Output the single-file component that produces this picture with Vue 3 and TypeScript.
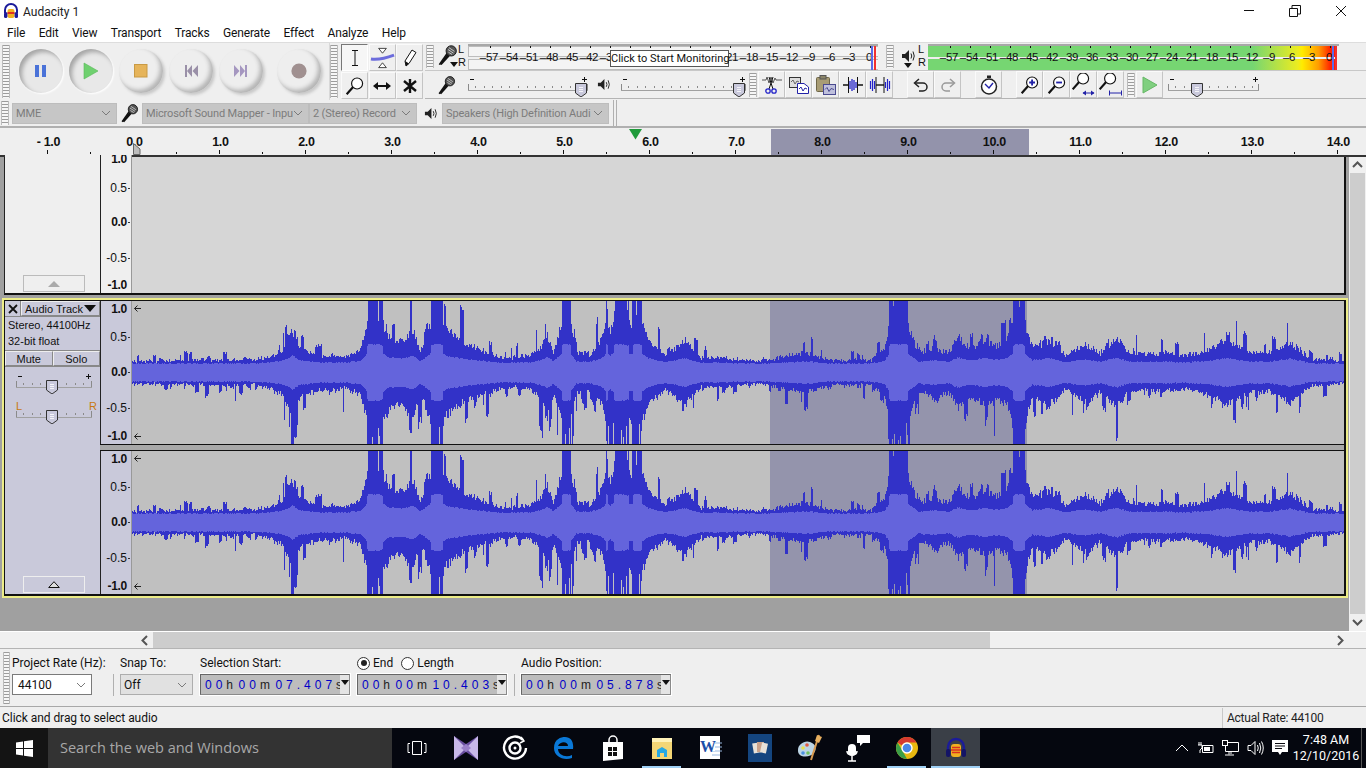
<script setup lang="ts">
import { h } from 'vue'

// ---------- waveform ----------
const envKeys: number[][] = [
  [132,18],[200,20],[255,20],[270,28],[282,38],[292,72],[300,40],[320,28],[345,26],[360,36],[368,95],[380,95],[388,62],[400,52],[408,64],[413,72],[420,34],[432,95],[440,95],[447,70],[455,60],[468,46],[490,32],[505,24],[530,28],[540,42],[547,64],[553,34],[563,95],[569,95],[576,34],[590,30],[603,60],[606,95],[610,72],[616,95],[624,95],[631,80],[634,95],[640,95],[648,54],[665,28],[685,54],[700,24],[720,24],[760,18],[785,26],[805,34],[830,20],[870,20],[884,38],[890,95],[905,95],[918,32],[934,42],[948,32],[958,60],[970,40],[985,56],[995,44],[1006,54],[1015,95],[1023,95],[1032,42],[1050,54],[1065,28],[1085,48],[1100,32],[1116,58],[1130,30],[1165,32],[1185,27],[1210,38],[1226,56],[1250,32],[1270,32],[1290,52],[1310,22],[1344,17],
]
function envAt(x: number): number {
  for (let i = 1; i < envKeys.length; i++) {
    if (x <= envKeys[i][0]) {
      const [x0, y0] = envKeys[i - 1]
      const [x1, y1] = envKeys[i]
      return y0 + ((y1 - y0) * (x - x0)) / (x1 - x0)
    }
  }
  return 15
}
let seed = 12345
function rnd(): number {
  seed = (seed * 1664525 + 1013904223) % 4294967296
  return seed / 4294967296
}
const c = 71.5
let peakPath = ''
let rmsPath = ''
// clustered spikes: each side keeps a short-lived burst level
function makeSide() {
  let burst = 0
  let left = 0
  return (e: number): number => {
    if (e >= 85) return rnd() < 0.12 ? 50 + rnd() * 20 : 71.5
    if (left <= 0 && rnd() < 0.14) {
      burst = rnd() * rnd()
      left = 1 + Math.floor(rnd() * 4)
    }
    left--
    const b = left >= 0 ? burst : 0
    return Math.min(71.5, e * (0.5 + 0.14 * rnd() + 0.95 * b) + rnd() * 2)
  }
}
const upper = makeSide()
const lower = makeSide()
for (let i = 0; i < 1212; i++) {
  const e = envAt(i + 132)
  const top = upper(e)
  const bot = lower(e)
  const rms = Math.min(30, 5.5 + e * 0.15 + (e > 85 ? 8 : 0)) + rnd() * 1.2
  peakPath += `M${i + 0.5} ${(c - top).toFixed(1)}V${(c + bot).toFixed(1)}`
  rmsPath += `M${i + 0.5} ${(c - rms).toFixed(1)}V${(c + rms).toFixed(1)}`
}

// ---------- data ----------
const menus = ['File', 'Edit', 'View', 'Transport', 'Tracks', 'Generate', 'Effect', 'Analyze', 'Help']
const dbs = [57, 54, 51, 48, 45, 42, 39, 36, 33, 30, 27, 24, 21, 18, 15, 12, 9, 6, 3, 0]
const rulerLabels = [-1, 0, 1, 2, 3, 4, 5, 6, 7, 8, 9, 10, 11, 12, 13, 14]
const fmt = (n: number) => (n < 0 ? '- ' + Math.abs(n).toFixed(1) : n.toFixed(1))
const sec = 86
const zero = 133.4
const majorTicks = rulerLabels.map((n) => zero + n * sec)
const minorTicks = rulerLabels.map((n) => zero + (n + 0.5) * sec).filter((x) => x < 1366)
const rulerMarks = majorTicks.map((x) => `M${Math.round(x) + 0.5} 22V26`).join('') + minorTicks.map((x) => `M${Math.round(x) + 0.5} 24V26`).join('')

// ---------- slider ----------
function Slider(props: { w: number; t: number; plain?: boolean }) {
  const { w, t, plain } = props
  let ticks = `M1.5 11V17M${w - 1.5} 11V17`
  for (let x = 8; x < w - 4; x += 8.6) ticks += `M${Math.round(x) + 0.5} 13V15`
  const signs = plain ? '' : `M3 6.5H7M${w - 7} 6.5H${w - 2}M${w - 4.5} 4V9`
  return h('svg', { width: w, height: 24, viewBox: `0 0 ${w} 24`, class: 'sld' }, [
    h('path', { d: ticks, stroke: '#8a8a8a', fill: 'none', 'shape-rendering': 'crispEdges' }),
    h('path', { d: `M1 17.5H${w - 1}`, stroke: '#a0a0a0', fill: 'none', 'shape-rendering': 'crispEdges' }),
    h('path', { d: signs, stroke: '#111', fill: 'none', 'shape-rendering': 'crispEdges' }),
    h('path', { d: `M${t - 5.5} 10.5H${t + 5.5}V20L${t} 24L${t - 5.5} 20Z`, fill: '#c9c9dc', stroke: '#333' }),
    h('path', { d: `M${t - 2} 14.5H${t + 2}M${t - 2} 16.5H${t + 2}M${t - 2} 18.5H${t + 2}`, stroke: '#f4f4f8' }),
  ])
}
Slider.props = ['w', 't', 'plain']

function Grip() {
  return h('div', { class: 'grip' })
}
</script>

<template>
  <div class="app">
    <svg class="defs">
      <symbol id="mic" viewBox="0 0 24 24">
        <path d="M3 22 L11 11 L14 13 L5 23 Z" fill="#111" />
        <path d="M2.5 22.5 L12 9" stroke="#111" stroke-width="1.6" />
        <circle cx="15.5" cy="7.5" r="5.6" fill="#555" stroke="#111" />
        <path d="M12 6l6 4M13 4l6 4M12.5 9l4 2.5" stroke="#ddd" stroke-width=".9" />
      </symbol>
      <symbol id="spk" viewBox="0 0 14 14">
        <path d="M1 5H4L8 1V13L4 9H1Z" fill="#222" />
        <path d="M10 4.5Q11.5 7 10 9.5M12 2.5Q14.5 7 12 11.5" stroke="#222" fill="none" />
      </symbol>
      <symbol id="lens" viewBox="0 0 24 24">
        <path d="M2 22 L10 13" stroke="#111" stroke-width="2.6" />
        <circle cx="14.5" cy="9" r="6.6" fill="#fff" stroke="#111" stroke-width="1.4" />
      </symbol>
      <symbol id="chev" viewBox="0 0 10 6">
        <path d="M1 1L5 5L9 1" fill="none" stroke="#7a7a7a" />
      </symbol>
    </svg>

    <!-- title -->
    <header class="title">
      <svg class="appicon" width="16" height="16" viewBox="0 0 16 16">
        <path d="M2 10V7a6 6 0 0 1 12 0v3" fill="none" stroke="#1b1b9a" stroke-width="2" />
        <rect x="4.5" y="6" width="7" height="9" rx="2" fill="#f0b020" />
        <rect x="4.5" y="9" width="7" height="2" fill="#e03020" />
        <rect x="1" y="9" width="3.4" height="6" rx="1.5" fill="#1b1b9a" />
        <rect x="11.6" y="9" width="3.4" height="6" rx="1.5" fill="#1b1b9a" />
      </svg>
      <span class="title-text">Audacity 1</span>
      <div class="winbtns">
        <svg width="12" height="12" viewBox="0 0 12 12"><path d="M1 5.5H11" stroke="#111" /></svg>
        <svg width="12" height="12" viewBox="0 0 12 12"><path d="M.5 3.5H8.5V11.5H.5ZM3 3V.5H11.5V9H9" fill="none" stroke="#111" /></svg>
        <svg width="12" height="12" viewBox="0 0 12 12"><path d="M1 1L11 11M11 1L1 11" stroke="#111" /></svg>
      </div>
    </header>

    <!-- menu -->
    <nav class="menu">
      <span v-for="m in menus" :key="m">{{ m }}</span>
    </nav>

    <!-- toolbars top -->
    <section class="tb-top">
      <div class="transport">
        <Grip />
        <div class="tbtn down b1"><svg width="14" height="14" viewBox="0 0 14 14"><path d="M1 1H5V13H1ZM8 1H12V13H8Z" fill="#4a72d8" /></svg></div>
        <div class="tbtn down b2"><svg width="16" height="18" viewBox="0 0 16 18"><path d="M1 1L15 9L1 17Z" fill="#6fd06f" stroke="#58b858" stroke-width=".6" /></svg></div>
        <div class="tbtn b3"><svg width="14" height="14" viewBox="0 0 14 14"><rect x=".5" y=".5" width="12.5" height="12.5" fill="#e6b45a" stroke="#c99a44" /></svg></div>
        <div class="tbtn b4"><svg width="14" height="14" viewBox="0 0 14 14"><path d="M1 1H3V13H1ZM8 1V13L3 7ZM14 1V13L8.5 7Z" fill="#9a90a8" /></svg></div>
        <div class="tbtn b5"><svg width="14" height="14" viewBox="0 0 14 14"><path d="M0 1V13L5.5 7ZM6 1V13L11 7ZM11 1H13V13H11Z" fill="#a597c0" /></svg></div>
        <div class="tbtn b6"><svg width="16" height="16" viewBox="0 0 16 16"><circle cx="8" cy="8" r="7.6" fill="#a09090" /></svg></div>
      </div>

      <div class="tools">
        <Grip />
        <div class="tool-grid">
          <div class="btn on"><svg width="18" height="18" viewBox="0 0 18 18"><path d="M6 1.5H12M9 1.5V16.5M6 16.5H12" stroke="#111" fill="none" /></svg></div>
          <div class="btn"><svg width="26" height="22" viewBox="0 0 26 22"><path d="M9 1H17L13 6ZM9 21H17L13 16Z" fill="#fff" stroke="#111" stroke-width=".8" /><path d="M1 12C8 13 17 11 25 8" stroke="#6c6cdc" stroke-width="3" fill="none" /></svg></div>
          <div class="btn"><svg width="18" height="20" viewBox="0 0 18 20"><path d="M5 18L4 13L11 2L15 4.5L8 15.5Z" fill="#fff" stroke="#111" /><path d="M5 18L8 15.5L4 13Z" fill="#111" /></svg></div>
          <div class="btn"><svg width="20" height="20"><use href="#lens" /></svg></div>
          <div class="btn"><svg width="18" height="10" viewBox="0 0 18 10"><path d="M3 5H15" stroke="#111" stroke-width="2" /><path d="M5 1V9L0 5ZM13 1V9L18 5Z" fill="#111" /></svg></div>
          <div class="btn"><svg width="16" height="16" viewBox="0 0 16 16"><path d="M8 1V15M2 3L14 13M14 3L2 13" stroke="#111" stroke-width="2.4" /></svg></div>
        </div>
      </div>

      <div class="right">
        <div class="row1">
          <Grip />
          <div class="meter-icon">
            <svg class="mic-big" width="22" height="22"><use href="#mic" /></svg>
            <span class="drop"></span>
            <span class="lr"><i>L</i><i>R</i></span>
          </div>
          <div class="meter rec">
            <div class="half"></div>
            <div class="half"></div>
            <div class="tickline"></div>
            <div class="scale">
              <span v-for="d in dbs" :key="d">{{ d ? '–' + d : '0' }}</span>
            </div>
            <div class="peak"></div>
            <div class="tooltip">Click to Start Monitoring</div>
          </div>
          <div class="row1-gap"></div>
          <Grip />
          <div class="meter-icon sp">
            <svg class="spk-big" width="14" height="14"><use href="#spk" /></svg>
            <span class="drop"></span>
            <span class="lr"><i>L</i><i>R</i></span>
          </div>
          <div class="meter play">
            <div class="half"></div>
            <div class="half"></div>
            <div class="tickline"></div>
            <div class="scale">
              <span v-for="d in dbs" :key="d">{{ d ? '–' + d : '0' }}</span>
            </div>
            <div class="peak"></div>
          </div>
        </div>

        <div class="row2">
          <Grip />
          <svg class="r2mic" width="20" height="20"><use href="#mic" /></svg>
          <Slider class="s1" :w="122" :t="114" />
          <svg class="r2spk" width="13" height="13"><use href="#spk" /></svg>
          <Slider class="s2" :w="127" :t="119" />
          <Grip class="g2" />
          <div class="btn e"><svg width="22" height="22" viewBox="0 0 22 22"><path d="M1 6H5L6 3L8 9L10 3L12 9L14 4L15 6H21" stroke="#555" fill="none" /><path d="M12 3L8 15M8 3L12 15" stroke="#111" /><circle cx="7" cy="17" r="2.2" fill="none" stroke="#2222c8" stroke-width="1.3" /><circle cx="13" cy="17" r="2.2" fill="none" stroke="#2222c8" stroke-width="1.3" /></svg></div>
          <div class="btn e"><svg width="22" height="20" viewBox="0 0 22 20"><rect x="1.5" y="2.5" width="11" height="10" fill="#ddd" stroke="#333" /><path d="M3 7l2-2 2 4 2-3 2 1" stroke="#666" fill="none" /><path d="M9.5 8.5H16L20.5 12V18.5H9.5Z" fill="#fff" stroke="#2222a8" /><path d="M11 14l2-2 2 4 2-3 2 1" stroke="#2222a8" fill="none" /></svg></div>
          <div class="btn e"><svg width="22" height="22" viewBox="0 0 22 22"><rect x="1.5" y="3.5" width="13" height="14" rx="1" fill="#a89c74" stroke="#6e6648" /><rect x="5" y="1.5" width="6" height="3.5" fill="#8a8468" stroke="#555" /><rect x="8.5" y="10.5" width="12" height="10" fill="#bfc0dc" stroke="#4a4a90" /><path d="M10 15.5l2-2 2 4 2-3 3 1" stroke="#4a4a90" fill="none" /></svg></div>
          <div class="btn e"><svg width="22" height="18" viewBox="0 0 22 18"><path d="M1 9H6M16 9H21" stroke="#111" stroke-width="1.4" /><path d="M6.5 1V17M15.5 1V17" stroke="#111" /><path d="M8 5V13M10 3V15M12 4V14M14 6V12" stroke="#2222c8" stroke-width="1.3" /></svg></div>
          <div class="btn e"><svg width="22" height="18" viewBox="0 0 22 18"><path d="M7 9H15" stroke="#111" stroke-width="1.4" /><path d="M7 1V17M15 1V17" stroke="#111" /><path d="M1.5 5V13M3.5 3V15M5.5 5V13M16.5 6V12M18.5 3V15M20.5 5V13" stroke="#2222c8" stroke-width="1.2" /></svg></div>
          <div class="btn e ml15"><svg width="16" height="14" viewBox="0 0 16 14"><path d="M2 5H10A4 4 0 0 1 10 13H6" fill="none" stroke="#222" stroke-width="1.5" /><path d="M6 1L1.5 5L6 9" fill="none" stroke="#222" stroke-width="1.5" /></svg></div>
          <div class="btn e"><svg width="16" height="14" viewBox="0 0 16 14"><path d="M14 5H6A4 4 0 0 0 6 13H10" fill="none" stroke="#999" stroke-width="1.5" /><path d="M10 1L14.5 5L10 9" fill="none" stroke="#999" stroke-width="1.5" /></svg></div>
          <div class="btn e ml15"><svg width="18" height="20" viewBox="0 0 18 20"><rect x="7" y=".5" width="4" height="2.5" fill="#222" /><circle cx="9" cy="11.5" r="7.5" fill="#fff" stroke="#222" stroke-width="1.5" /><path d="M5 9L9 13L13 8" stroke="#2222a8" stroke-width="1.4" fill="none" /></svg></div>
          <div class="btn e ml15"><svg width="20" height="20" viewBox="0 0 24 24"><use href="#lens" /><path d="M11 9H18M14.5 5.5V12.5" stroke="#2222a8" stroke-width="2.2" /></svg></div>
          <div class="btn e"><svg width="20" height="20" viewBox="0 0 24 24"><use href="#lens" /><path d="M11 9H18" stroke="#2222a8" stroke-width="2.2" /></svg></div>
          <div class="btn e"><svg width="24" height="24" viewBox="0 0 24 24"><svg x="-1" y="-2" width="20" height="20" viewBox="0 0 24 24"><use href="#lens" /></svg><path d="M11 20H22" stroke="#2222a8" /><path d="M14 17.5V22.500L10.500 20ZM19 17.500V22.500L22.500 20Z" fill="#2222a8" /></svg></div>
          <div class="btn e"><svg width="24" height="24" viewBox="0 0 24 24"><svg x="-1" y="-2" width="20" height="20" viewBox="0 0 24 24"><use href="#lens" /></svg><path d="M10 20H23M10.500 17.500V22.500M22.500 17.500V22.500" stroke="#2222a8" /></svg></div>
          <Grip class="g3" />
          <div class="btn e"><svg width="18" height="20" viewBox="0 0 18 20"><path d="M2 2L16 10L2 18Z" fill="#7fcf7f" stroke="#66b866" /></svg></div>
          <Slider class="s3" :w="93" :t="30" />
        </div>
      </div>
    </section>

    <!-- device toolbar -->
    <section class="tb-dev">
      <Grip />
      <div class="combo c-host"><span>MME</span><svg width="10" height="6"><use href="#chev" /></svg></div>
      <svg class="devmic" width="20" height="20"><use href="#mic" /></svg>
      <div class="combo c-in"><span>Microsoft Sound Mapper - Inpu</span><svg width="10" height="6"><use href="#chev" /></svg></div>
      <div class="combo c-ch"><span>2 (Stereo) Record</span><svg width="10" height="6"><use href="#chev" /></svg></div>
      <svg class="devspk" width="13" height="13"><use href="#spk" /></svg>
      <div class="combo c-out"><span>Speakers (High Definition Audi</span><svg width="10" height="6"><use href="#chev" /></svg></div>
      <div class="vsep"></div>
    </section>

    <!-- ruler -->
    <section class="ruler">
      <div class="sel-band"></div>
      <span v-for="(n, i) in rulerLabels" :key="n" class="rl" :style="{ left: majorTicks[i] + 'px' }">{{ fmt(n) }}</span>
      <svg class="rmarks" width="1366" height="27"><path :d="rulerMarks" stroke="#111" fill="none" shape-rendering="crispEdges" /></svg>
      <svg class="playhead" width="14" height="11" viewBox="0 0 14 11"><path d="M0 0H13L6.500 10.500Z" fill="#1f9a3a" /></svg>
      <svg class="startmark" width="8" height="12" viewBox="0 0 8 12"><path d="M.5 .5L7 6V11.500H.5Z" fill="#bdbdbd" stroke="#666" /></svg>
    </section>

    <!-- tracks -->
    <section class="tracks">
      <div class="track-scroll">
        <div class="track-top">
          <div class="panel-top">
            <div class="collapse light"><svg width="12" height="6" viewBox="0 0 12 6"><path d="M6 0L12 6H0Z" fill="#aaa" /></svg></div>
          </div>
          <div class="vr vr-top">
            <b class="v1">1.0</b><span class="v2">0.5</span><b class="v3">0.0</b><span class="v4">-0.5</span><b class="v5">-1.0</b>
          </div>
          <div class="empty-wave"></div>
        </div>

        <div class="track-sel">
          <div class="inner">
            <div class="panel">
              <div class="p-head">
                <div class="p-x"><svg width="10" height="10" viewBox="0 0 10 10"><path d="M1 1L9 9M9 1L1 9" stroke="#111" stroke-width="1.8" /></svg></div>
                <div class="p-name"><span>Audio Track</span><svg width="12" height="7" viewBox="0 0 12 7"><path d="M0 0H12L6 7Z" fill="#111" /></svg></div>
              </div>
              <div class="p-info"><div>Stereo, 44100Hz</div><div>32-bit float</div></div>
              <div class="p-ms"><div>Mute</div><div>Solo</div></div>
              <div class="p-gain"><Slider :w="78" :t="37" /></div>
              <div class="p-pan">
                <span class="pl">L</span><span class="pr">R</span>
                <Slider :w="78" :t="37" :plain="true" />
              </div>
              <div class="collapse"><svg width="12" height="7" viewBox="0 0 12 7"><path d="M6 .700L11.300 6.500H.700Z" fill="#ddd" stroke="#111" /></svg></div>
            </div>
            <div class="channels">
              <div v-for="ch in 2" :key="ch" class="chan" :class="{ second: ch === 2 }">
                <div class="vr">
                  <b class="v1">1.0</b><span class="v2">0.5</span><b class="v3">0.0</b><span class="v4">-0.5</span><b class="v5">-1.0</b>
                </div>
                <div class="wave">
                  <svg width="1212" height="143" viewBox="0 0 1212 143">
                    <rect x="638" y="0" width="257" height="143" fill="#9494ac" />
                    <path :d="peakPath" stroke="#3232c8" shape-rendering="crispEdges" />
                    <path :d="rmsPath" stroke="#6464dc" shape-rendering="crispEdges" />
                    <path d="M9 7.500H2.500M5.500 4.500L2.500 7.500L5.500 10.500M9 135.500H2.500M5.500 132.500L2.500 135.500L5.500 138.500" fill="none" stroke="#222" />
                  </svg>
                </div>
              </div>
            </div>
          </div>
        </div>
      </div>
      <div class="vscroll">
        <svg width="11" height="7" viewBox="0 0 11 7"><path d="M1 6L5.500 1.500L10 6" fill="none" stroke="#555" stroke-width="2" /></svg>
        <div class="vthumb"></div>
        <svg width="11" height="7" viewBox="0 0 11 7"><path d="M1 1L5.500 5.500L10 1" fill="none" stroke="#555" stroke-width="2" /></svg>
      </div>
    </section>

    <!-- h scroll -->
    <section class="hscroll">
      <div class="hs-gap"></div>
      <svg class="hl" width="7" height="11" viewBox="0 0 7 11"><path d="M6 1L1.500 5.500L6 10" fill="none" stroke="#555" stroke-width="2" /></svg>
      <div class="hthumb"></div>
      <svg class="hr" width="7" height="11" viewBox="0 0 7 11"><path d="M1 1L5.500 5.500L1 10" fill="none" stroke="#555" stroke-width="2" /></svg>
    </section>

    <!-- selection bar -->
    <section class="selbar">
      <Grip />
      <div class="fld f-rate"><label>Project Rate (Hz):</label><div class="select white"><span>44100</span><svg width="10" height="6"><use href="#chev" /></svg></div></div>
      <div class="sbsep"></div>
      <div class="fld f-snap"><label>Snap To:</label><div class="select"><span>Off</span><svg width="10" height="6"><use href="#chev" /></svg></div></div>
      <div class="fld f-start">
        <label>Selection Start:</label>
        <div class="num"><span class="d">00</span><span class="u">h</span><span class="d">00</span><span class="u">m</span><span class="d">07.407</span><span class="u">s</span><i></i></div>
      </div>
      <div class="fld f-end">
        <label class="radios"><span class="radio on"></span>End<span class="radio r2"></span>Length</label>
        <div class="num"><span class="d">00</span><span class="u">h</span><span class="d">00</span><span class="u">m</span><span class="d">10.403</span><span class="u">s</span><i></i></div>
      </div>
      <div class="sbsep s2"></div>
      <div class="fld f-pos">
        <label>Audio Position:</label>
        <div class="num"><span class="d">00</span><span class="u">h</span><span class="d">00</span><span class="u">m</span><span class="d">05.878</span><span class="u">s</span><i></i></div>
      </div>
    </section>

    <!-- status -->
    <section class="status">
      <span>Click and drag to select audio</span>
      <span class="rate">Actual Rate: 44100</span>
    </section>

    <!-- taskbar -->
    <footer class="taskbar">
      <div class="start"><svg width="17" height="17" viewBox="0 0 17 17"><path d="M0 2.500L7 1.500V8H0ZM8 1.300L17 0V8H8ZM0 9H7V15.500L0 14.500ZM8 9H17V17L8 15.700Z" fill="#fff" /></svg></div>
      <div class="search">Search the web and Windows</div>
      <div class="ticons">
        <div class="ti"><svg width="20" height="16" viewBox="0 0 20 16"><path d="M5.500 1.500H14.500V14.500H5.500ZM3 3.500H1V12.500H3M17 3.500H19V12.500H17" fill="none" stroke="#fff" /></svg></div>
        <div class="ti"><svg width="24" height="26" viewBox="0 0 24 26"><path d="M0 1L12 9L24 1V25L12 17L0 25Z" fill="#6a4fa0" /><path d="M0 1L12 13L0 25ZM24 1L12 13L24 25Z" fill="#c8b8e8" /><path d="M12 9L17 13L12 17L7 13Z" fill="#9a80c8" /></svg></div>
        <div class="ti"><svg width="26" height="26" viewBox="0 0 26 26"><path d="M21 5A11 11 0 1 0 24 13" fill="none" stroke="#fff" stroke-width="2.400" /><circle cx="13" cy="13" r="5.500" fill="none" stroke="#fff" stroke-width="2.400" /><circle cx="13" cy="13" r="1.500" fill="#fff" /><path d="M19 2L22 6L18 8" fill="none" stroke="#fff" stroke-width="1.500" /></svg></div>
        <div class="ti"><svg width="22" height="24" viewBox="0 0 22 24"><path d="M20 13H5C5 19 13 22 19 19V22C11 25 1 21 1 12C1 3 8 1 12 1C18 1 21 6 20 13ZM5 10H15C15 5 7 5 5 10Z" fill="#0a78d7" /></svg></div>
        <div class="ti"><svg width="22" height="26" viewBox="0 0 22 26"><path d="M7 8V5A4 4 0 0 1 15 5V8" fill="none" stroke="#fff" stroke-width="1.500" /><path d="M1 7H21V24L1 26Z" fill="#fff" /><path d="M6 12H10V16H6ZM11 12H15V16H11ZM6 17H10V21H6ZM11 17H15V21H11Z" fill="#111" /></svg></div>
        <div class="ti"><svg width="22" height="24" viewBox="0 0 22 24"><path d="M1 2H11L13 5H21V23H1Z" fill="#f4d675" /><path d="M1 2H21V6H1Z" fill="#fff2b8" /><path d="M6 21V14L11 11L16 14V21H13V17H9V21Z" fill="#27a9e3" /></svg></div>
        <div class="ti"><svg width="22" height="26" viewBox="0 0 22 26"><path d="M0 1H20V24H0Z" fill="#fff" /><path d="M12 8H22M12 12H22M12 16H22M12 20H20" stroke="#99b8e0" /><rect x="0" y="1" width="15" height="15" fill="#fff" /><text x="0" y="17" class="wd">W</text></svg></div>
        <div class="ti"><svg width="24" height="28" viewBox="0 0 24 28"><rect width="24" height="28" fill="#14457f" /><rect x="5" y="9" width="7" height="10" fill="#e8e2d8" transform="rotate(-10 8 14)" /><rect x="9" y="8" width="7" height="10" fill="#c9a28a" /><rect x="13" y="9" width="6" height="10" fill="#e8e2d8" transform="rotate(12 16 14)" /></svg></div>
        <div class="ti"><svg width="26" height="28" viewBox="0 0 26 28"><path d="M2 16C2 10 9 6 14 8C20 10 21 15 18 19C15 23 6 24 3 20C2 19 2 17 2 16Z" fill="#bcd4e4" /><circle cx="7" cy="14" r="1.800" fill="#e8e04a" /><circle cx="11" cy="11" r="1.800" fill="#e05a40" /><circle cx="7" cy="19" r="1.800" fill="#4a90e0" /><circle cx="12" cy="19" r="1.800" fill="#70c060" /><path d="M23 1L15 26" stroke="#d89a50" stroke-width="2" /><path d="M21 1L26 3L23 9L19 7Z" fill="#e8b060" /></svg></div>
        <div class="ti"><svg width="24" height="28" viewBox="0 0 24 28"><rect x="2" y="10" width="8" height="12" rx="4" fill="#fff" /><path d="M1 17C1 22 11 22 11 17M6 22V27M2 27H10" fill="none" stroke="#fff" stroke-width="1.500" /><path d="M11 1H24V9H17L14 12V9H11Z" fill="#fff" /></svg></div>
        <div class="ti"><svg width="22" height="22" viewBox="0 0 22 22"><circle cx="11" cy="11" r="11" fill="#e8b810" /><path d="M11 0A11 11 0 0 1 20.500 5.500H11A5.500 5.500 0 0 0 6 8.500L1.500 5.500A11 11 0 0 1 11 0Z" fill="#d63a30" /><path d="M1.500 5.500L6.500 14L11 22A11 11 0 0 1 1.500 5.500Z" fill="#3a9e48" /><circle cx="11" cy="11" r="5" fill="#4a88e8" stroke="#fff" stroke-width="1.400" /></svg></div>
        <div class="ti act"><svg width="22" height="22" viewBox="0 0 22 22"><path d="M3 13V10A8 8 0 0 1 19 10V13" fill="none" stroke="#1b1b9a" stroke-width="2.400" /><rect x="6" y="7" width="10" height="13" rx="3" fill="#f0b020" /><path d="M6 13H16M7 10.500H15M7 15.500H15" stroke="#d83020" stroke-width="1.400" /><rect x="1" y="12" width="4.500" height="8" rx="2" fill="#141466" /><rect x="16.500" y="12" width="4.500" height="8" rx="2" fill="#141466" /></svg></div>
      </div>
      <div class="tray">
        <svg width="14" height="8" viewBox="0 0 14 8"><path d="M1 7L7 1L13 7" fill="none" stroke="#fff" /></svg>
        <svg width="17" height="14" viewBox="0 0 17 14"><path d="M5.500 4.500H16V11.500H5.500Z" fill="none" stroke="#fff" /><path d="M7 6H13V10H7Z" fill="#fff" /><path d="M2 1V4M4 1V4M1 4H5V7L3 9V12" fill="none" stroke="#fff" /></svg>
        <svg width="17" height="16" viewBox="0 0 17 16"><path d="M3.500 2.500H16.500V11.500H3.500ZM7 11.500V14.500M3 15H12M9 12V14" fill="none" stroke="#fff" /><rect x=".5" y=".5" width="5" height="5" fill="#0a0a10" stroke="#fff" /></svg>
        <svg width="17" height="16" viewBox="0 0 17 16"><path d="M1 5.500H4L8 1.500V14.500L4 10.500H1Z" fill="none" stroke="#fff" /><path d="M10.500 5Q12 8 10.500 11M12.500 3Q15 8 12.500 13M14.500 1.500Q18 8 14.500 14.500" fill="none" stroke="#fff" /></svg>
        <svg width="16" height="16" viewBox="0 0 16 16"><path d="M0 0H16V12H10L8 15L6 12H0Z" fill="#fff" /><path d="M3 3.500H13M3 6H13M3 8.500H10" stroke="#0a0a10" /></svg>
      </div>
      <div class="clock"><div>7:48 AM</div><div>12/10/2016</div></div>
      <div class="showdesk"></div>
    </footer>
  </div>
</template>

<style scoped>
.app { width: 1366px; height: 768px; overflow: hidden; background: #f0f0f0; font-family: "Liberation Sans", Arial, sans-serif; color: #111; display: flex; flex-direction: column; position: relative; }
.defs { display: none; }
.btn, .tbtn, .num, .combo, .select { box-sizing: border-box; }

.title { height: 22px; background: #fff; display: flex; align-items: center; padding-left: 3px; flex: none; }
.appicon { margin-right: 4px; }
.title-text { font: 12px Roboto, sans-serif; color: #222; margin-top: 1px; }
.winbtns { margin-left: auto; display: flex; gap: 34px; padding-right: 19px; margin-top: -1px; }

.menu { height: 20px; background: #fff; display: flex; align-items: center; padding: 1px 0 0 7px; box-sizing: border-box; font: 12px Roboto, sans-serif; letter-spacing: -.15px; gap: 13.5px; flex: none; color: #111; }

.tb-top { height: 58px; background: #efefef; border-top: 1px solid #ddd; display: flex; flex: none; box-sizing: border-box; }
.grip { width: 8px; flex: none; margin: 2px 1px; background: repeating-linear-gradient(to bottom, #9c9c9c 0 1px, #f6f6f6 1px 3px); border-left: 1px solid #bbb; border-right: 1px solid #bbb; box-sizing: border-box; }
.transport { width: 330px; display: flex; border-right: 1px solid #d8d8d8; position: relative; box-sizing: border-box; padding-left: 1px; }
.tbtn { width: 44px; height: 44px; border-radius: 50%; display: flex; align-items: center; justify-content: center; margin-top: 6px; background: #eee; flex: none; }
.tbtn { box-shadow: inset -3px -3px 4px #b4b4b4, 2px 2px 3px #c8c8c8; }
.tbtn.down { box-shadow: inset 3px 3px 4px #a6a6a6, 1px 1px 2px #fff; background: #e8e8e8; }
.b1 { margin-left: 8px; }
.b2, .b3, .b4, .b5 { margin-left: 6px; }
.b6 { margin-left: 14px; }

.tools { width: 95px; display: flex; flex: none; margin-left: -1px; margin-right: 1px; }
.tool-grid { display: grid; grid-template-columns: repeat(3, 27.5px); grid-auto-rows: 27px; gap: 1px 0; margin-left: 2px; margin-top: 1px; }
.btn { width: 27px; height: 27px; display: flex; align-items: center; justify-content: center; border: 1px solid; border-color: #fafafa #c4c4c4 #c4c4c4 #fafafa; flex: none; background: #efefef; }
.btn.on { border-color: #777 #fff #fff #777; background: #f6f6f6; }

.right { flex: 1; display: flex; flex-direction: column; }
.row1 { height: 28px; display: flex; border-bottom: 1px solid #c8c8c8; box-sizing: border-box; }
.row2 { height: 28px; display: flex; align-items: center; border-bottom: 1px solid #b4b4b4; box-sizing: border-box; }
.meter-icon { width: 33px; position: relative; flex: none; }
.mic-big { position: absolute; left: 2px; top: 1px; }
.spk-big { position: absolute; left: 6px; top: 6px; }
.drop { position: absolute; left: 15px; top: 19px; border-left: 4px solid transparent; border-right: 4px solid transparent; border-top: 5px solid #111; }
.sp .drop { left: 9px; top: 20px; }
.lr { position: absolute; right: 2px; top: 0; font-size: 11px; display: flex; flex-direction: column; line-height: 13px; }
.lr i { font-style: normal; }
.meter { position: relative; display: flex; flex-direction: column; justify-content: space-between; flex: none; height: 26px; margin-top: 1px; box-sizing: border-box; border-top: 2px solid #a8a8a8; }
.rec { width: 410px; }
.play { width: 411px; }
.half { height: 11px; }
.rec .half { background: #f4f4f4; border: 1px solid #bcbcbc; border-right: none; box-sizing: border-box; }
.play .half { background: linear-gradient(to right, #76d672 0, #76d672 79%, #ecec20 90%, #ffec00 91%, #ff9c00 95%, #ff2000 98%, #ff2000 99%, #f0f0f0 99.2%); }
.tickline { position: absolute; left: 22px; top: 0; width: 381px; height: 2px; background: repeating-linear-gradient(to right, #111 0 1px, transparent 1px 20px); }
.scale { position: absolute; left: 11px; top: 3px; display: flex; font-size: 11.5px; line-height: 16px; letter-spacing: -.3px; }
.scale span { width: 20px; text-align: center; flex: none; }
.peak { position: absolute; right: 2px; top: 0; bottom: 0; width: 5px; border-left: 2px solid #5a6ae8; border-right: 2px solid #f03030; box-sizing: border-box; }
.tooltip { position: absolute; left: 142px; top: 4px; background: #fff; border: 1px solid #555; font: 11px Roboto, sans-serif; line-height: 15px; white-space: nowrap; width: 119px; box-sizing: border-box; text-align: center; }
.row1-gap { width: 7px; flex: none; }

.r2mic { margin-left: 2px; }
.s1 { margin-left: 10px; }
.r2spk { margin-left: 8px; }
.s2 { margin-left: 10px; }
.g2 { height: 24px; margin-left: 2px; margin-right: 1px; }
.g3 { height: 24px; margin: 0 1px 0 3px; }
.s3 { margin-left: 4px; }
.e { height: 27px; }
.ml15 { margin-left: 14px; }
.sld { flex: none; display: block; }

.tb-dev { height: 28px; background: #efefef; display: flex; align-items: center; border-bottom: 2px solid #b0b0b0; box-sizing: border-box; flex: none; }
.tb-dev > .grip { height: 24px; }
.combo { height: 21px; background: #c6c6c6; border: 1px solid #bdbdbd; font: 11px Roboto, sans-serif; letter-spacing: -.15px; color: #7c7c7c; display: flex; align-items: center; padding: 0 3px; justify-content: space-between; flex: none; }
.combo span { white-space: nowrap; }
.combo svg { flex: none; margin-right: 2px; }
.c-host { width: 105px; margin-left: 2px; }
.devmic { margin-left: 3px; margin-right: 2px; }
.c-in { width: 167px; }
.c-ch { width: 108px; }
.devspk { margin: 0 5px 0 7px; }
.c-out { width: 167px; }
.vsep { width: 2px; height: 27px; border-left: 1px solid #b0b0b0; border-right: 1px solid #b0b0b0; margin-left: 4px; }

.ruler { height: 27px; background: #efefef; position: relative; border-bottom: 2px solid #333; box-sizing: content-box; flex: none; margin-bottom: -2px; }
.sel-band { position: absolute; left: 771px; width: 258px; top: 1px; bottom: 0; background: #9393ab; }
.rl { position: absolute; top: 7px; margin-left: 1px; transform: translateX(-50%); font-size: 12.5px; font-weight: 700; letter-spacing: -.3px; line-height: 15px; white-space: nowrap; }
.rmarks { position: absolute; left: 0; top: 0; }
.playhead { position: absolute; left: 629px; top: 1px; }
.startmark { position: absolute; left: 133px; top: 15px; }

.tracks { height: 476px; display: flex; flex: none; background: #a0a0a0; }
.track-scroll { width: 1349px; flex: none; overflow: hidden; }
.track-top { height: 140px; margin-left: 4px; width: 1342px; box-sizing: border-box; border-left: 1px solid #222; border-right: 2px solid #111; border-bottom: 2px solid #111; display: flex; }
.panel-top { width: 95px; background: #efefef; position: relative; flex: none; }
.collapse { position: absolute; left: 18px; bottom: 1px; width: 62px; height: 17px; border: 1px solid #bbb; background: #efefef; display: flex; align-items: center; justify-content: center; box-sizing: border-box; }
.vr { width: 32px; flex: none; position: relative; background: #c9c9da; border-left: 1px solid #222; box-sizing: border-box; font-size: 12px; border-right: 1px solid #999; }
.vr-top { background: #efefef; }
.vr > * { position: absolute; right: 4px; line-height: 14px; }
.vr b { letter-spacing: -.3px; }
.vr .v2::after, .vr .v3::after, .vr .v4::after { content: ""; position: absolute; right: -3px; top: 7px; width: 2px; height: 1px; background: #333; }
.v1 { top: 1px; } .v2 { top: 29px; } .v3 { top: 64px; } .v4 { top: 100px; } .v5 { top: 128px; }
.vr-top .v1 { top: -3px; } .vr-top .v2 { top: 26px; } .vr-top .v3 { top: 60px; } .vr-top .v4 { top: 96px; } .vr-top .v5 { top: 123px; }
.empty-wave { flex: 1; background: #d6d6d6; }

.track-sel { margin: 3px 0 0 2px; width: 1346px; height: 300px; box-sizing: border-box; border: 2px solid #eded88; }
.inner { height: 296px; box-sizing: border-box; border: solid #111; border-width: 1px 2px 2px 1px; display: flex; background: #c0c0c0; }
.panel { width: 95px; background: #c9c9da; position: relative; flex: none; font-size: 11px; }
.p-head { height: 16px; display: flex; border-bottom: 1px solid #888; box-sizing: border-box; }
.p-x { width: 15px; display: flex; align-items: center; justify-content: center; border-right: 1px solid #888; }
.p-name { flex: 1; padding: 0 3px; display: flex; align-items: center; justify-content: space-between; border: 1px solid; border-color: #eee #888 #888 #eee; box-sizing: border-box; white-space: nowrap; }
.p-info { padding: 0 0 0 3px; line-height: 16px; height: 33px; }
.p-ms { display: flex; height: 17px; border-top: 1px solid #888; border-bottom: 1px solid #888; text-align: center; line-height: 14px; box-sizing: border-box; }
.p-ms div { flex: 1; border: 1px solid; border-color: #eee #888 #888 #eee; box-sizing: border-box; }
.p-gain { margin: 3px 0 0 10px; }
.p-pan { margin: 6px 0 0 10px; position: relative; }
.pl, .pr { position: absolute; top: 0; font-size: 11px; color: #c87810; line-height: 12px; }
.pl { left: 1px; } .pr { right: 3px; }
.panel .collapse { left: 18px; bottom: 1px; background: #c9c9da; border-color: #eee; }
.channels { flex: 1; display: flex; flex-direction: column; min-width: 0; background: linear-gradient(to bottom, transparent 143px, #111 143px, #111 144px, #a8a8a8 144px, #a8a8a8 149px, #111 149px, #111 150px, transparent 150px); }
.chan { display: flex; height: 143px; flex: none; }
.chan.second { margin-top: 7px; }
.wave { flex: 1; overflow: hidden; }
.wave svg { display: block; }

.vscroll { flex: 1; background: #f0f0f0; display: flex; flex-direction: column; align-items: center; padding-top: 6px; box-sizing: border-box; }
.vthumb { width: 15px; height: 441px; background: #cdcdcd; margin: 5px 0 5px; }

.hscroll { height: 18px; background: #f0f0f0; display: flex; align-items: center; border-top: 1px solid #fff; border-bottom: 1px solid #b4b4b4; box-sizing: border-box; flex: none; }
.hs-gap { width: 141px; }
.hthumb { width: 837px; height: 16px; background: #cdcdcd; margin-left: 5px; }
.hr { margin-left: 347px; }

.selbar { height: 58px; background: #efefef; display: flex; padding-top: 3px; box-sizing: border-box; border-bottom: 1px solid #a8a8a8; flex: none; }
.selbar > .grip { height: 52px; margin-top: 0; margin-left: 3px; width: 7px; }
.fld { display: flex; flex-direction: column; font: 12px Roboto, sans-serif; flex: none; }
.fld label { height: 22px; line-height: 20px; display: flex; align-items: center; }
.f-rate { margin-left: 1px; width: 100px; }
.sbsep { width: 1px; height: 22px; background: #b0b0b0; margin: 22px 0 0 1px; }
.f-snap { margin-left: 6px; width: 73px; }
.f-start { margin-left: 7px; width: 150px; }
.f-end { margin-left: 7px; width: 150px; }
.sbsep.s2 { margin-left: 7px; }
.f-pos { margin-left: 6px; width: 150px; }
.select { height: 21px; width: 80px; background: #e1e1e1; border: 1px solid #adadad; display: flex; align-items: center; justify-content: space-between; padding: 0 5px 0 3px; font-size: 12px; }
.select.white { background: #fff; border-color: #7a7a7a; padding-left: 5px; }
.f-snap .select { width: 73px; }
.num { height: 21px; width: 150px; background: #bdbdbd; border: 1px solid #8a8a8a; border-top-color: #666; border-left-color: #666; display: flex; align-items: center; font: 12px "Liberation Sans", sans-serif; padding-left: 4px; position: relative; outline: 1px solid #fff; }
.num .d { color: #0000c8; letter-spacing: 4px; }
.num .u { color: #222; letter-spacing: 0; margin-right: 5.5px; }
.num i { position: absolute; right: 0; top: 0; width: 9px; bottom: 0; background: #e4e4e4; }
.num i::after { content: ""; position: absolute; left: 1px; top: 5px; border-left: 4px solid transparent; border-right: 4px solid transparent; border-top: 5px solid #111; }
.radios .radio { width: 13px; height: 13px; border: 1px solid #333; border-radius: 50%; background: #fff; display: inline-block; margin-right: 3px; position: relative; box-sizing: border-box; }
.radio.on::after { content: ""; position: absolute; left: 2.500px; top: 2.500px; width: 6px; height: 6px; background: #222; border-radius: 50%; }
.radio.r2 { margin-left: 8px; }

.status { height: 21px; background: #efefef; display: flex; align-items: center; font: 12px Roboto, sans-serif; padding-left: 2px; justify-content: space-between; flex: none; letter-spacing: -.05px; }
.rate { width: 144px; padding-left: 4px; border-left: 1px solid #c8c8c8; line-height: 20px; box-sizing: border-box; color: #222; letter-spacing: -.25px; }

.taskbar { height: 40px; flex: none; background: #05070f; display: flex; align-items: center; color: #fff; }
.start { width: 48px; height: 40px; background: #141414; display: flex; align-items: center; justify-content: center; flex: none; }
.search { width: 344px; height: 40px; background: #333; color: #a8a8a8; font: 14.500px "Open Sans", sans-serif; line-height: 40px; padding-left: 12px; box-sizing: border-box; flex: none; }
.ticons { display: flex; flex: none; }
.ti { width: 49px; height: 40px; display: flex; align-items: center; justify-content: center; box-sizing: border-box; flex: none; }
.ti:nth-child(6), .ti:nth-child(11) { background: linear-gradient(#9fd0f5, #9fd0f5) center bottom / 39px 2px no-repeat; }
.ti.act { background: linear-gradient(#9fd0f5, #9fd0f5) center bottom / 100% 2px no-repeat, #3a3f47; }
.tray { margin-left: auto; display: flex; align-items: center; gap: 8px; flex: none; }
.clock { width: 70px; margin-left: 3px; text-align: center; font: 12.500px Roboto, sans-serif; line-height: 16px; color: #fff; flex: none; }
.showdesk { width: 5px; height: 40px; border-left: 1px solid #555; flex: none; box-sizing: border-box; }
.wd { font: 700 16px "Liberation Serif", serif; fill: #1c4fa8; }
</style>

<style>
html, body { margin: 0; padding: 0; background: #f0f0f0; }
</style>
